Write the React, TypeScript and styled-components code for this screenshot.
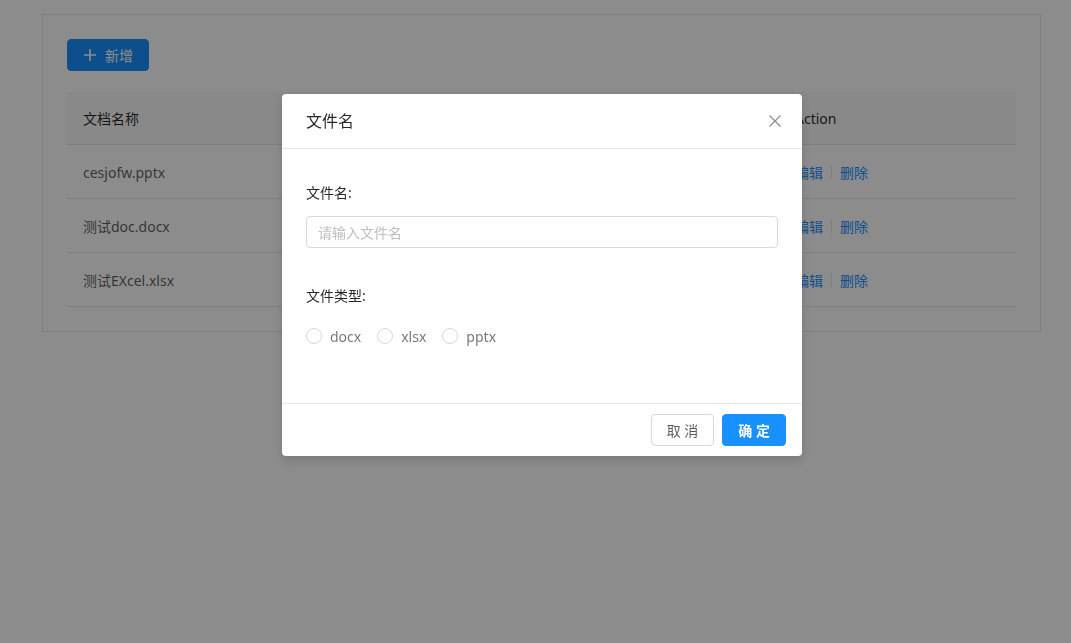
import React from "react";
import styled, { createGlobalStyle } from "styled-components";

const Global = createGlobalStyle`
  html, body { margin: 0; padding: 0; background: #fff; }
  body {
    font-family: "Noto Sans", "Noto Sans CJK SC", sans-serif;
    font-size: 14px;
    color: rgba(0,0,0,0.65);
  }
  * { box-sizing: border-box; }
`;

const Page = styled.div`
  width: 1071px;
  height: 643px;
  padding: 14px 30px 0 42px;
`;

const Card = styled.div`
  border: 1px solid #e8e8e8;
  padding: 24px 24px 24px 24px;
`;

const PrimaryButton = styled.button`
  display: inline-flex;
  align-items: center;
  gap: 8px;
  height: 32px;
  padding: 0 15px;
  border: 1px solid #1890ff;
  border-radius: 4px;
  background: #1890ff;
  color: #fff;
  font-family: inherit;
  font-size: 14px;
  margin-bottom: 21px;
`;

const Table = styled.div`
  display: grid;
  grid-template-columns: 1fr 237px;
`;

const Cell = styled.div<{ $head?: boolean }>`
  height: ${(p) => (p.$head ? 53 : 54)}px;
  display: flex;
  align-items: center;
  padding: 0 16px;
  border-bottom: 1px solid #e8e8e8;
  background: ${(p) => (p.$head ? "#fafafa" : "#fff")};
  color: ${(p) => (p.$head ? "rgba(0,0,0,0.85)" : "rgba(0,0,0,0.65)")};
  padding-top: ${(p) => (p.$head ? 0 : 1)}px;
`;

const Link = styled.a`
  color: #1890ff;
  text-decoration: none;
`;

const VDivider = styled.span`
  display: inline-block;
  width: 1px;
  height: 14px;
  margin: 0 8px;
  background: #e8e8e8;
`;

const Mask = styled.div`
  position: fixed;
  inset: 0;
  background: rgba(0, 0, 0, 0.45);
`;

const Modal = styled.div`
  position: fixed;
  top: 94px;
  left: 282px;
  width: 520px;
  background: #fff;
  border-radius: 4px;
  box-shadow: 0 4px 12px rgba(0, 0, 0, 0.15);
  display: flex;
  flex-direction: column;
`;

const ModalHeader = styled.div`
  height: 55px;
  padding: 0 24px;
  border-bottom: 1px solid #e8e8e8;
  display: flex;
  align-items: center;
  justify-content: space-between;
`;

const ModalTitle = styled.div`
  font-size: 16px;
  color: rgba(0, 0, 0, 0.85);
  line-height: 22px;
`;

const CloseButton = styled.button`
  border: 0;
  background: none;
  padding: 0;
  margin-right: -3px;
  width: 12px;
  height: 12px;
  display: flex;
  color: rgba(0, 0, 0, 0.45);
`;

const ModalBody = styled.div`
  height: 254px;
  padding: 24px 24px 0;
  display: flex;
  flex-direction: column;
`;

const FormItem = styled.div<{ $gap?: number }>`
  display: flex;
  flex-direction: column;
  margin-bottom: ${(p) => p.$gap ?? 0}px;
`;

const Label = styled.label`
  line-height: 40px;
  height: 40px;
  color: rgba(0, 0, 0, 0.85);
  margin-bottom: 3px;
`;

const Input = styled.input`
  height: 32px;
  width: 100%;
  padding: 4px 11px;
  border: 1px solid #d9d9d9;
  border-radius: 4px;
  font-family: inherit;
  font-size: 14px;
  color: rgba(0, 0, 0, 0.65);
  outline: none;
  &::placeholder { color: #bfbfbf; }
`;

const RadioGroup = styled.div`
  display: flex;
  align-items: center;
  height: 34px;
`;

const RadioWrap = styled.label`
  display: inline-flex;
  align-items: center;
  margin-right: 8px;
  color: rgba(0, 0, 0, 0.55);
`;

const RadioCircle = styled.span`
  width: 16px;
  height: 16px;
  border-radius: 50%;
  border: 1px solid #d9d9d9;
  background: #fff;
`;

const RadioText = styled.span`
  padding: 0 8px;
`;

const ModalFooter = styled.div`
  border-top: 1px solid #e8e8e8;
  padding: 10px 16px;
  display: flex;
  justify-content: flex-end;
  gap: 8px;
`;

const FooterButton = styled.button<{ $primary?: boolean }>`
  height: 32px;
  padding: 0 15px;
  border-radius: 4px;
  font-family: inherit;
  font-size: 14px;
  letter-spacing: 0;
  border: 1px solid ${(p) => (p.$primary ? "#1890ff" : "#d9d9d9")};
  background: ${(p) => (p.$primary ? "#1890ff" : "#fff")};
  color: ${(p) => (p.$primary ? "#fff" : "rgba(0,0,0,0.65)")};
  font-weight: ${(p) => (p.$primary ? 700 : 400)};
`;

const rows = ["cesjofw.pptx", "测试doc.docx", "测试EXcel.xlsx"];

export default function App() {
  return (
    <>
      <Global />
      <Page>
        <Card>
          <PrimaryButton>
            <svg width="14" height="14" viewBox="0 0 14 14">
              <path d="M7 1v12M1 7h12" stroke="currentColor" strokeWidth="1.6" />
            </svg>
            新增
          </PrimaryButton>
          <Table>
            <Cell $head>文档名称</Cell>
            <Cell $head>Action</Cell>
            {rows.map((r) => (
              <React.Fragment key={r}>
                <Cell>{r}</Cell>
                <Cell>
                  <Link>编辑</Link>
                  <VDivider />
                  <Link>删除</Link>
                </Cell>
              </React.Fragment>
            ))}
          </Table>
        </Card>
      </Page>
      <Mask />
      <Modal>
        <ModalHeader>
          <ModalTitle>文件名</ModalTitle>
          <CloseButton aria-label="Close">
            <svg width="12" height="12" viewBox="0 0 12 12">
              <path d="M0.5 0.5l11 11M11.5 0.5l-11 11" stroke="currentColor" strokeWidth="1.3" />
            </svg>
          </CloseButton>
        </ModalHeader>
        <ModalBody>
          <FormItem $gap={28}>
            <Label>文件名:</Label>
            <Input placeholder="请输入文件名" />
          </FormItem>
          <FormItem>
            <Label>文件类型:</Label>
            <RadioGroup>
              {["docx", "xlsx", "pptx"].map((t) => (
                <RadioWrap key={t}>
                  <RadioCircle />
                  <RadioText>{t}</RadioText>
                </RadioWrap>
              ))}
            </RadioGroup>
          </FormItem>
        </ModalBody>
        <ModalFooter>
          <FooterButton>取 消</FooterButton>
          <FooterButton $primary>确 定</FooterButton>
        </ModalFooter>
      </Modal>
    </>
  );
}
